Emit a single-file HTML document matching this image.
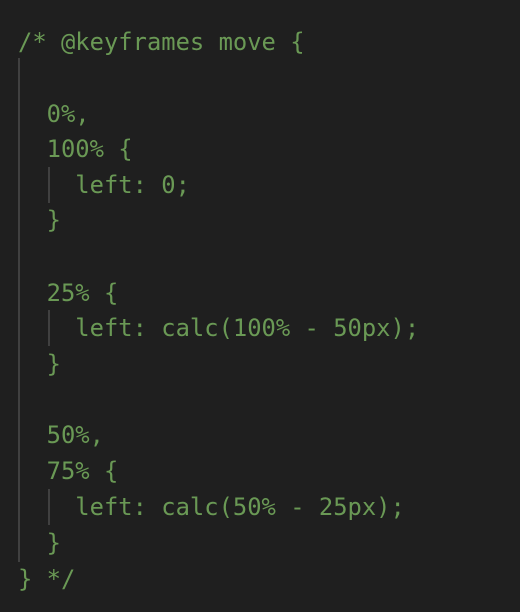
<!DOCTYPE html>
<html><head><style>
html,body{margin:0;padding:0;width:520px;height:612px;background:#1f1f1f;overflow:hidden}
.l{position:absolute;left:18px;font:23.8px/36px "DejaVu Sans Mono","Liberation Mono",monospace;color:#6a9955;white-space:pre;}
.g{position:absolute;width:2px;background:#404040}
</style></head><body>
<div class="g" style="left:18px;top:58px;height:504px"></div>
<div class="g" style="left:48px;top:167px;height:36px"></div>
<div class="g" style="left:48px;top:310px;height:36px"></div>
<div class="g" style="left:48px;top:489px;height:36px"></div>
<div class="l" style="top:24px">/* @keyframes move {</div>
<div class="l" style="top:96px">  0%,</div>
<div class="l" style="top:131px">  100% {</div>
<div class="l" style="top:167px">    left: 0;</div>
<div class="l" style="top:202px">  }</div>
<div class="l" style="top:275px">  25% {</div>
<div class="l" style="top:310px">    left: calc(100% - 50px);</div>
<div class="l" style="top:346px">  }</div>
<div class="l" style="top:417px">  50%,</div>
<div class="l" style="top:453px">  75% {</div>
<div class="l" style="top:489px">    left: calc(50% - 25px);</div>
<div class="l" style="top:525px">  }</div>
<div class="l" style="top:561px">} */</div>
</body></html>
